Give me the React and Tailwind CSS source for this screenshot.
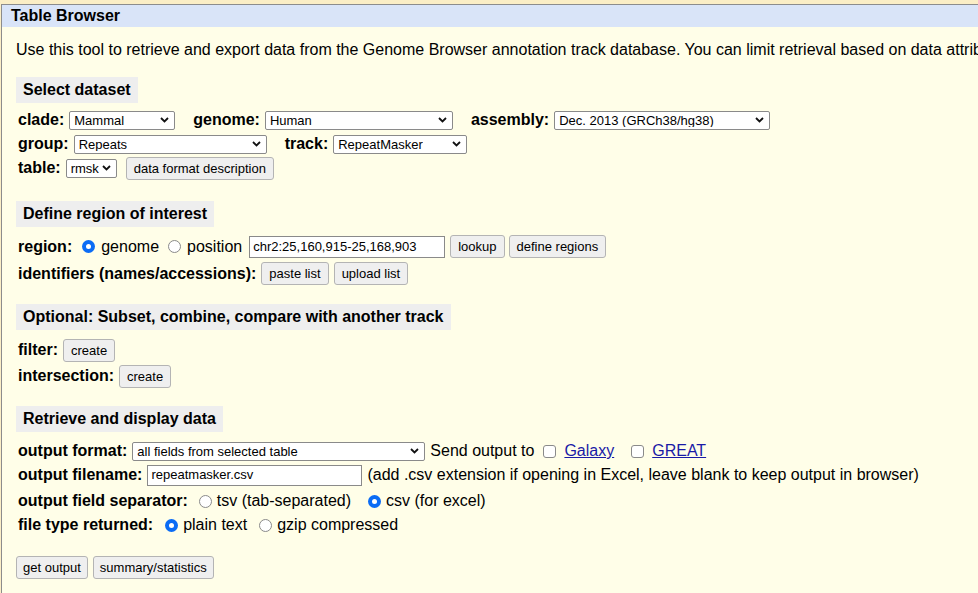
const Chevron = () => (
  <svg width="9" height="6" viewBox="0 0 9 6" className="shrink-0">
    <path d="M1 1 L4.5 4.5 L8 1" fill="none" stroke="#111" strokeWidth="1.8" />
  </svg>
);

const Select = ({ value, width }) => (
  <span
    className="flex h-[19px] items-center justify-between rounded-[2px] border border-[#8a8a8a] bg-white pl-[4px] pr-[5px] text-[13px] leading-none text-black"
    style={{ width }}
  >
    <span className="truncate">{value}</span>
    <Chevron />
  </span>
);

const Button = ({ children, className = '' }) => (
  <span
    className={`flex h-[23px] items-center rounded-[3px] border border-[#b4b4b4] bg-[#efefef] px-[7px] text-[13px] leading-none text-black ${className}`}
  >
    {children}
  </span>
);

const Radio = ({ checked, className = '' }) =>
  checked ? (
    <span className={`flex h-[13px] w-[13px] items-center justify-center rounded-full bg-[#0b6cf5] ${className}`}>
      <span className="h-[5px] w-[5px] rounded-full bg-white" />
    </span>
  ) : (
    <span className={`h-[13px] w-[13px] rounded-full border border-[#8a8a8a] bg-white ${className}`} />
  );

const Checkbox = ({ className = '' }) => (
  <span className={`h-[13px] w-[13px] rounded-[3px] border border-[#8a8a8a] bg-white ${className}`} />
);

const Heading = ({ children, className = '' }) => (
  <div className={`inline-flex h-[26px] items-center bg-[#eeeeee] px-[7px] text-[16px] font-bold ${className}`}>
    {children}
  </div>
);

const Label = ({ children, className = '' }) => (
  <span className={`text-[16px] font-bold ${className}`}>{children}</span>
);

export default function App() {
  return (
    <div className="min-h-screen overflow-hidden bg-[#fbeec6] pt-[4px] font-['Liberation_Sans',Arial,sans-serif] text-black">
      <div className="ml-[1px] min-h-[589px] border-l border-t border-[#8c8c8c] bg-[#fffee8]">
        <div className="flex h-[22px] items-center bg-[#d9e4f8] pl-[9px] text-[16px] font-bold">Table Browser</div>

        <div className="pl-[14px]">
          <p className="mt-[14px] whitespace-nowrap text-[16px] leading-[18px]">
            Use this tool to retrieve and export data from the Genome Browser annotation track database. You can limit retrieval based on data attributes and intersect or merge with data from another track, or retrieve DNA sequence covered by a track.
          </p>

          <Heading className="mt-[18px]">Select dataset</Heading>
          <div className="mt-[5px] pl-[2px]">
            <div className="flex h-[24px] items-center">
              <Label>clade:</Label>
              <span className="ml-[5px]"><Select value="Mammal" width={106} /></span>
              <Label className="ml-[18px]">genome:</Label>
              <span className="ml-[5px]"><Select value="Human" width={188} /></span>
              <Label className="ml-[18px]">assembly:</Label>
              <span className="ml-[5px]"><Select value="Dec. 2013 (GRCh38/hg38)" width={216} /></span>
            </div>
            <div className="flex h-[24px] items-center">
              <Label>group:</Label>
              <span className="ml-[5px]"><Select value="Repeats" width={193} /></span>
              <Label className="ml-[18px]">track:</Label>
              <span className="ml-[5px]"><Select value="RepeatMasker" width={134} /></span>
            </div>
            <div className="flex h-[24px] items-center">
              <Label>table:</Label>
              <span className="ml-[5px]"><Select value="rmsk" width={51} /></span>
              <Button className="ml-[9px]">data format description</Button>
            </div>
          </div>

          <Heading className="mt-[21px]">Define region of interest</Heading>
          <div className="mt-[6px] pl-[2px]">
            <div className="flex h-[27px] items-center">
              <Label>region:</Label>
              <Radio checked className="ml-[10px]" />
              <span className="ml-[6px] text-[16px]">genome</span>
              <Radio className="ml-[9px]" />
              <span className="ml-[6px] text-[16px]">position</span>
              <span className="ml-[7px] flex h-[22px] w-[196px] items-center border border-[#8a8a8a] bg-white pl-[3px] text-[13px]">
                chr2:25,160,915-25,168,903
              </span>
              <Button className="ml-[5px]">lookup</Button>
              <Button className="ml-[4px]">define regions</Button>
            </div>
            <div className="flex h-[27px] items-center">
              <Label>identifiers (names/accessions):</Label>
              <Button className="ml-[5px]">paste list</Button>
              <Button className="ml-[5px]">upload list</Button>
            </div>
          </div>

          <Heading className="mt-[17px]">Optional: Subset, combine, compare with another track</Heading>
          <div className="mt-[7px] pl-[2px]">
            <div className="flex h-[26px] items-center">
              <Label>filter:</Label>
              <Button className="ml-[5px]">create</Button>
            </div>
            <div className="flex h-[26px] items-center">
              <Label>intersection:</Label>
              <Button className="ml-[5px]">create</Button>
            </div>
          </div>

          <Heading className="mt-[17px]">Retrieve and display data</Heading>
          <div className="mt-[7px] pl-[2px]">
            <div className="flex h-[24px] items-center">
              <Label>output format:</Label>
              <span className="ml-[5px]"><Select value="all fields from selected table" width={293} /></span>
              <span className="ml-[5px] text-[16px]">Send output to</span>
              <Checkbox className="ml-[9px]" />
              <a href="#" className="ml-[8px] text-[16px] text-[#1a1aa6] underline">Galaxy</a>
              <Checkbox className="ml-[17px]" />
              <a href="#" className="ml-[8px] text-[16px] text-[#1a1aa6] underline">GREAT</a>
            </div>
            <div className="flex h-[24px] items-center">
              <Label>output filename:</Label>
              <span className="ml-[5px] flex h-[21px] w-[215px] items-center border border-[#8a8a8a] bg-white pl-[3px] text-[13px]">
                repeatmasker.csv
              </span>
              <span className="ml-[5px] text-[16px]">(add .csv extension if opening in Excel, leave blank to keep output in browser)</span>
            </div>
            <div className="mt-[2px] flex h-[24px] items-center">
              <Label>output field separator:</Label>
              <Radio className="ml-[11px]" />
              <span className="ml-[5px] text-[16px]">tsv (tab-separated)</span>
              <Radio checked className="ml-[17px]" />
              <span className="ml-[5px] text-[16px]">csv (for excel)</span>
            </div>
            <div className="flex h-[24px] items-center">
              <Label>file type returned:</Label>
              <Radio checked className="ml-[12px]" />
              <span className="ml-[5px] text-[16px]">plain text</span>
              <Radio className="ml-[12px]" />
              <span className="ml-[5px] text-[16px]">gzip compressed</span>
            </div>
          </div>

          <div className="mt-[19px] flex gap-[5px]">
            <Button className="!px-[6px]">get output</Button>
            <Button className="!px-[6px]">summary/statistics</Button>
          </div>
        </div>
      </div>
    </div>
  );
}
